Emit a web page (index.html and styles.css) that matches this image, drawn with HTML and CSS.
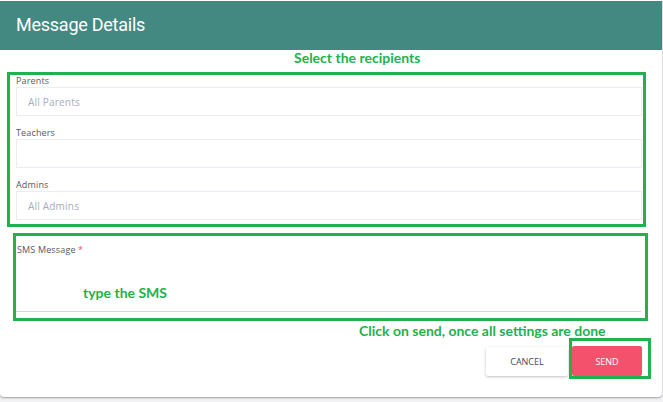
FILE: index.html
```html
<!DOCTYPE html>
<html>
<head>
<meta charset="utf-8">
<link rel="stylesheet" href="styles.css">
</head>
<body>
<div class="modal">
  <div class="modal-header"><h1 class="title">Message Details</h1></div>
  <div class="note note-top">Select the recipients</div>
  <div class="mark mark-recipients">
    <div class="field">
      <div class="label">Parents</div>
      <div class="input"><span class="placeholder">All Parents</span></div>
    </div>
    <div class="field">
      <div class="label">Teachers</div>
      <div class="input"></div>
    </div>
    <div class="field">
      <div class="label">Admins</div>
      <div class="input"><span class="placeholder">All Admins</span></div>
    </div>
  </div>
  <div class="mark mark-sms">
    <div class="label sms-label">SMS Message <span class="req">*</span></div>
    <div class="textarea"><span class="note note-sms">type the SMS</span></div>
  </div>
  <div class="note note-send">Click on send, once all settings are done</div>
  <div class="footer">
    <button class="btn btn-cancel">CANCEL</button>
    <div class="mark mark-send"><button class="btn btn-send">SEND</button></div>
  </div>
</div>
</body>
</html>
```
FILE: styles.css
```css
* { box-sizing: border-box; }
html, body { margin: 0; padding: 0; }
body {
  background: #f2f2f4;
  width: 663px;
  height: 402px;
  overflow: hidden;
  font-family: "Open Sans", "Liberation Sans", sans-serif;
}
.modal {
  width: 662px;
  height: 397px;
  background: #ffffff;
  border-radius: 0 0 4px 4px;
  box-shadow: 0 1px 2px rgba(0,0,0,0.35);
  padding-top: 1px;
}
.modal-header {
  height: 49px;
  background: #438982;
  display: flex;
  align-items: center;
  padding-left: 16px;
}
.title {
  margin: 0;
  font-family: Roboto, "Liberation Sans", sans-serif;
  font-weight: 400;
  font-size: 18px;
  letter-spacing: -0.25px;
  color: #ffffff;
  line-height: 20px;
  padding-bottom: 1px;
}
.note {
  font-family: Lato, "Liberation Sans", sans-serif;
  font-weight: 700;
  color: #22b14c;
}
.note-top {
  font-size: 14px;
  line-height: 14px;
  height: 22px;
  padding-top: 1px;
  padding-left: 294px;
}
.mark { border: 3px solid #22b14c; }
.mark-recipients {
  margin-left: 7px;
  width: 639px;
  height: 155px;
  padding: 0 1px 0 6px;
  display: flex;
  flex-direction: column;
  gap: 11px;
}
.label {
  font-size: 9px;
  line-height: 12px;
  height: 12px;
  color: #575962;
  letter-spacing: 0.15px;
}
.input {
  height: 29px;
  border: 1px solid #ebedf2;
  display: flex;
  align-items: center;
  padding-left: 11px;
}
.placeholder {
  font-size: 10px;
  color: #a9acb8;
  letter-spacing: 0.2px;
}
.mark-sms {
  margin-top: 6px;
  margin-left: 13px;
  width: 635px;
  height: 88px;
  padding: 8px 4px 0 0;
}
.sms-label { padding-left: 1px; }
.req { color: #f4516c; }
.textarea {
  height: 56px;
  border-bottom: 1px solid #d4d4d4;
  padding-left: 67px;
  padding-top: 29px;
}
.note-sms {
  display: block;
  font-size: 14px;
  line-height: 15px;
}
.note-send {
  font-size: 14px;
  line-height: 15px;
  height: 17px;
  padding-top: 2px;
  padding-left: 359px;
}
.footer {
  display: flex;
  justify-content: flex-end;
  align-items: flex-end;
  padding-right: 11px;
  gap: 1px;
}
.btn {
  font-family: "Open Sans", "Liberation Sans", sans-serif;
  font-size: 9px;
  font-weight: 500;
  border: none;
  border-radius: 2px;
  padding: 0;
  margin: 0;
  cursor: pointer;
}
.btn-cancel {
  width: 82px;
  height: 29px;
  background: #ffffff;
  color: #464855;
  box-shadow: 0 1px 3px rgba(0,0,0,0.25);
  margin-bottom: 3px;
}
.mark-send {
  width: 82px;
  height: 41px;
  padding: 5px 0 0 0;
}
.btn-send {
  display: block;
  width: 70px;
  height: 30px;
  background: #f4516c;
  color: #ffffff;
}
```
